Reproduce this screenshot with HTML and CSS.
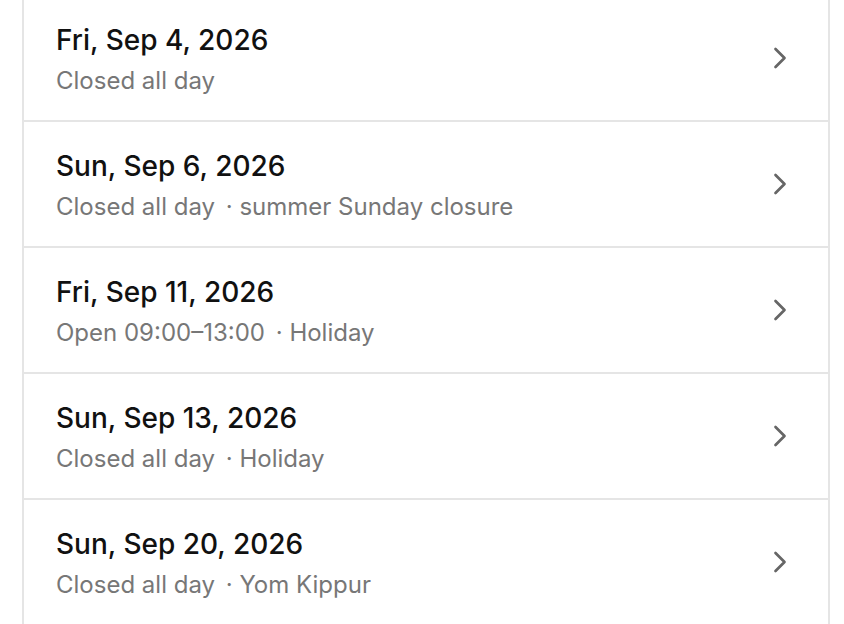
FILE: index.html
```html
<!DOCTYPE html>
<html lang="en">
<head>
<meta charset="utf-8">
<title>Schedule exceptions</title>
<link rel="stylesheet" href="styles.css">
</head>
<body>
<ul class="list">
  <li class="row">
    <div class="text">
      <div class="title">Fri, Sep 4, 2026</div>
      <div class="sub">Closed all day</div>
    </div>
    <svg class="chev" viewBox="0 0 24 24" aria-hidden="true"><path d="m9 18 6-6-6-6"/></svg>
  </li>
  <li class="row">
    <div class="text">
      <div class="title">Sun, Sep 6, 2026</div>
      <div class="sub">Closed all day <span class="note">· summer Sunday closure</span></div>
    </div>
    <svg class="chev" viewBox="0 0 24 24" aria-hidden="true"><path d="m9 18 6-6-6-6"/></svg>
  </li>
  <li class="row">
    <div class="text">
      <div class="title">Fri, Sep 11, 2026</div>
      <div class="sub">Open 09:00–13:00 <span class="note">· Holiday</span></div>
    </div>
    <svg class="chev" viewBox="0 0 24 24" aria-hidden="true"><path d="m9 18 6-6-6-6"/></svg>
  </li>
  <li class="row">
    <div class="text">
      <div class="title">Sun, Sep 13, 2026</div>
      <div class="sub">Closed all day <span class="note">· Holiday</span></div>
    </div>
    <svg class="chev" viewBox="0 0 24 24" aria-hidden="true"><path d="m9 18 6-6-6-6"/></svg>
  </li>
  <li class="row">
    <div class="text">
      <div class="title">Sun, Sep 20, 2026</div>
      <div class="sub">Closed all day <span class="note">· Yom Kippur</span></div>
    </div>
    <svg class="chev" viewBox="0 0 24 24" aria-hidden="true"><path d="m9 18 6-6-6-6"/></svg>
  </li>
</ul>
</body>
</html>
```
FILE: styles.css
```css
html, body {
  margin: 0;
  padding: 0;
  background: #ffffff;
  font-family: Inter, "Noto Sans", sans-serif;
}
.list {
  list-style: none;
  margin: -6px 0 0 22px;
  padding: 0;
  width: 808px;
  box-sizing: border-box;
  border-left: 2px solid #e5e5e5;
  border-right: 2px solid #e5e5e5;
}
.row {
  display: flex;
  align-items: center;
  height: 126px;
  box-sizing: border-box;
  border-top: 2px solid #e5e5e5;
  padding: 0 30px 0 32px;
}
.text {
  flex: 1;
  display: flex;
  flex-direction: column;
  gap: 9px;
  padding-top: 3px;
}
.title {
  font-size: 28px;
  font-weight: 500;
  color: #111111;
  line-height: 34px;
}
.sub {
  font-size: 24px;
  color: #777777;
  line-height: 30px;
}
.note {
  margin-left: 4px;
}
.chev {
  width: 36px;
  height: 36px;
  fill: none;
  stroke: #666666;
  stroke-width: 1.8;
  stroke-linecap: round;
  stroke-linejoin: round;
}
```
